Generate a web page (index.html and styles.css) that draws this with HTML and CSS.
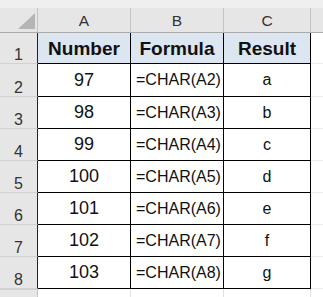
FILE: index.html
```html
<!DOCTYPE html>
<html>
<head>
<meta charset="utf-8">
<link rel="stylesheet" href="styles.css">
</head>
<body>
<div class="sheet">
  <div class="strip"></div>
  <div class="grid">
    <div class="corner"><svg class="tri" width="17" height="16" viewBox="0 0 17 16"><polygon points="17,0 17,16 0,16" fill="#b5b5b5"/></svg></div>
    <div class="colhead">A</div>
    <div class="colhead">B</div>
    <div class="colhead">C</div>
    <div class="colhead last"></div>

    <div class="rowhead r1">1</div>
    <div class="cell hdr r1">Number</div>
    <div class="cell hdr r1">Formula</div>
    <div class="cell hdr r1">Result</div>
    <div class="pad r1"></div>

    <div class="rowhead r2">2</div>
    <div class="cell num r2">97</div>
    <div class="cell fx r2">=CHAR(A2)</div>
    <div class="cell res r2">a</div>
    <div class="pad r2"></div>

    <div class="rowhead">3</div>
    <div class="cell num">98</div>
    <div class="cell fx">=CHAR(A3)</div>
    <div class="cell res">b</div>
    <div class="pad"></div>

    <div class="rowhead">4</div>
    <div class="cell num">99</div>
    <div class="cell fx">=CHAR(A4)</div>
    <div class="cell res">c</div>
    <div class="pad"></div>

    <div class="rowhead">5</div>
    <div class="cell num">100</div>
    <div class="cell fx">=CHAR(A5)</div>
    <div class="cell res">d</div>
    <div class="pad"></div>

    <div class="rowhead">6</div>
    <div class="cell num">101</div>
    <div class="cell fx">=CHAR(A6)</div>
    <div class="cell res">e</div>
    <div class="pad"></div>

    <div class="rowhead">7</div>
    <div class="cell num">102</div>
    <div class="cell fx">=CHAR(A7)</div>
    <div class="cell res">f</div>
    <div class="pad"></div>

    <div class="rowhead">8</div>
    <div class="cell num">103</div>
    <div class="cell fx">=CHAR(A8)</div>
    <div class="cell res">g</div>
    <div class="pad"></div>

    <div class="rowhead next"></div>
    <div class="blank"></div>
    <div class="blank"></div>
    <div class="blank"></div>
    <div class="blank lastb"></div>
  </div>
</div>
</body>
</html>
```
FILE: styles.css
```css
html, body {
  margin: 0;
  padding: 0;
  background: #ffffff;
}
body {
  font-family: "Liberation Sans", Arial, sans-serif;
  width: 323px;
  height: 297px;
  overflow: hidden;
}
.sheet {
  display: flex;
  flex-direction: column;
}
.strip {
  height: 8px;
  background: #efefef;
}
.grid {
  display: grid;
  grid-template-columns: 38px 93px 93px 87px 12px;
  grid-template-rows: 25px 31px 33px repeat(6, 32px) 9px;
}
.grid > div {
  box-sizing: border-box;
}
.corner {
  background: #e6e6e6;
  border-right: 1px solid #c4c4c4;
  border-bottom: 1px solid #ababab;
  display: flex;
  justify-content: flex-end;
  align-items: flex-end;
  padding: 0 2px 3px 0;
}
.tri {
  display: block;
}
.colhead {
  background: #e6e6e6;
  border-right: 1px solid #c4c4c4;
  border-bottom: 1px solid #ababab;
  display: flex;
  justify-content: center;
  align-items: center;
  padding-top: 2px;
  font-size: 15.5px;
  color: #333333;
}
.colhead.last {
  border-right: none;
}
.rowhead {
  background: #e6e6e6;
  border-right: 1px solid #222222;
  border-bottom: 1px solid #d2d2d2;
  display: flex;
  justify-content: center;
  align-items: flex-end;
  font-size: 16px;
  color: #333333;
  line-height: 17px;
}
.rowhead.next {
  border-right: 1px solid #c4c4c4;
  border-top: 1px solid #d2d2d2;
  border-bottom: none;
}
.cell {
  border-right: 1px solid #000000;
  border-bottom: 1px solid #000000;
  display: flex;
  align-items: center;
  color: #111111;
  white-space: nowrap;
}
.hdr {
  background: #dce6f1;
  justify-content: center;
  font-weight: bold;
  font-size: 19px;
  padding-top: 1px;
}
.num {
  justify-content: center;
  font-size: 18px;
}
.fx {
  justify-content: flex-start;
  padding-left: 5px;
  font-size: 16px;
}
.res {
  justify-content: center;
  font-size: 16px;
}
.pad {
  border-bottom: 1px solid #ececec;
}
.blank {
  border-right: 1px solid #e2e2e2;
}
.blank.lastb {
  border-right: none;
}
```
